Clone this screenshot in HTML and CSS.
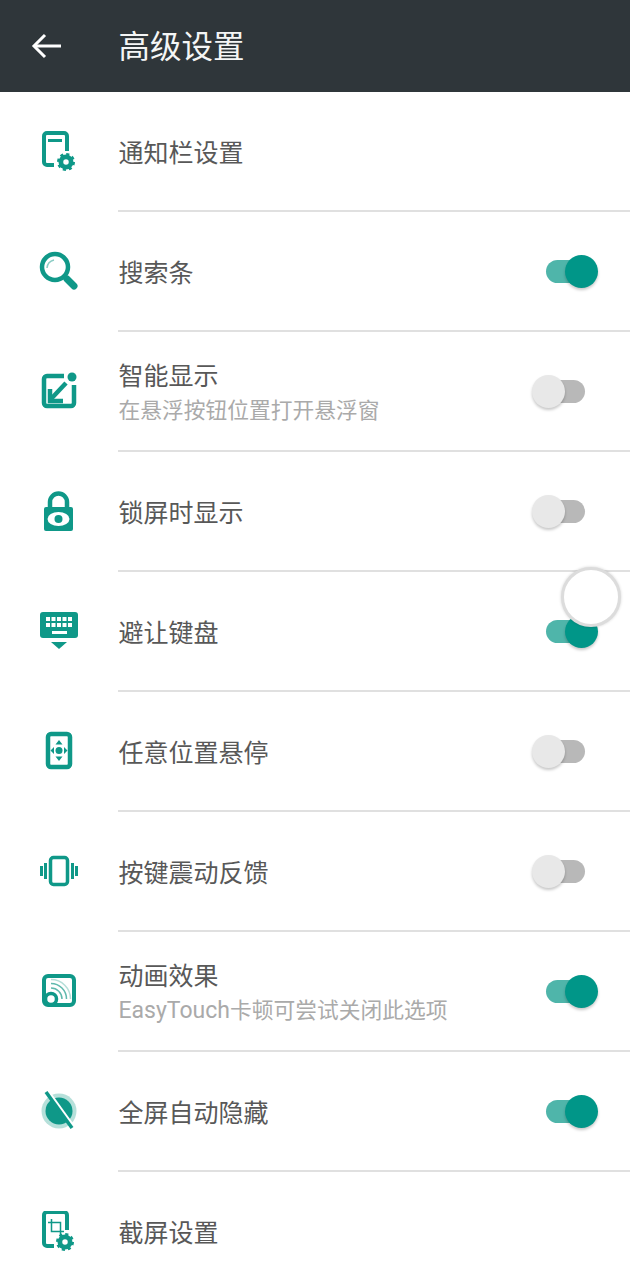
FILE: index.html
```html
<!DOCTYPE html>
<html lang="zh-CN">
<head>
<meta charset="utf-8">
<title>高级设置</title>
<link rel="stylesheet" href="styles.css">
</head>
<body>
<div class="page">
  <header class="appbar">
    <div class="appbar-icon">
      <svg width="32" height="28" viewBox="0 0 32 28" fill="none" stroke="#fff" stroke-width="3"><path d="M30 14H4"/><path d="M14 3L3 14l11 11"/></svg>
    </div>
    <h1 class="appbar-title">高级设置</h1>
  </header>
  <main class="list">
    <div class="row">
      <div class="row-icon">
        <svg class="ico" width="40" height="40" viewBox="0 0 40 40"><path class="s4" d="M28 20V5a3 3 0 0 0-3-3H8a3 3 0 0 0-3 3v26a3 3 0 0 0 3 3h7"/><path class="s3" d="M9 9.500h14"/><circle class="gear-teeth" cx="27" cy="31" r="7.500"/><circle class="gear-hub" cx="27" cy="31" r="4"/></svg>
      </div>
      <div class="row-body"><div class="text"><div class="label">通知栏设置</div></div></div>
    </div>
    <div class="row">
      <div class="row-icon">
        <svg class="ico" width="40" height="40" viewBox="0 0 40 40"><circle class="s45" cx="16" cy="16" r="13"/><path class="s7" d="M28 28L35 35"/><path class="thin" d="M8 17a9 9 0 0 1 7-8"/></svg>
      </div>
      <div class="row-body"><div class="text"><div class="label">搜索条</div></div><div class="toggle on"><span class="track"></span><span class="thumb"></span></div></div>
    </div>
    <div class="row">
      <div class="row-icon">
        <svg class="ico" width="40" height="40" viewBox="0 0 40 40"><path class="s45" d="M25 5H8a3 3 0 0 0-3 3v24a3 3 0 0 0 3 3h24a3 3 0 0 0 3-3V14"/><circle class="fill" cx="33" cy="6" r="4.500"/><path class="s45" d="M27 12L11 29"/><path class="s45" d="M11 18v12h13"/></svg>
      </div>
      <div class="row-body"><div class="text"><div class="label">智能显示</div><div class="sub">在悬浮按钮位置打开悬浮窗</div></div><div class="toggle"><span class="track"></span><span class="thumb"></span></div></div>
    </div>
    <div class="row">
      <div class="row-icon">
        <svg class="ico" width="40" height="40" viewBox="0 0 40 40"><path class="s45" d="M11 17v-6a8.500 8.500 0 0 1 17 0v6"/><rect class="fill" x="5" y="16" width="29" height="24" rx="2"/><ellipse class="hole" cx="19.500" cy="28" rx="11" ry="7"/><circle class="fill" cx="19.500" cy="28" r="4"/></svg>
      </div>
      <div class="row-body"><div class="text"><div class="label">锁屏时显示</div></div><div class="toggle"><span class="track"></span><span class="thumb"></span></div></div>
    </div>
    <div class="row">
      <div class="row-icon">
        <svg class="ico" width="40" height="40" viewBox="0 0 40 40"><rect class="fill" x="1" y="1" width="38" height="26" rx="3"/><path class="keys" d="M7 8h26M7 14h26"/><path class="space" d="M13 21.500h15"/><path class="fill" d="M12 31h16l-8 7z"/></svg>
      </div>
      <div class="row-body"><div class="text"><div class="label">避让键盘</div></div><div class="toggle on"><span class="track"></span><span class="thumb"></span></div></div>
    </div>
    <div class="row">
      <div class="row-icon">
        <svg class="ico" width="40" height="40" viewBox="0 0 40 40"><rect class="s45" x="9" y="3" width="22" height="33" rx="3"/><circle class="fill" cx="20" cy="19.500" r="3.500"/><path class="fill" d="M20 9l3.500 4.500h-7zM20 30l3.500-4.500h-7zM11.500 19.500l3.500-3.500v7zM28.500 19.500l-3.500-3.500v7z"/></svg>
      </div>
      <div class="row-body"><div class="text"><div class="label">任意位置悬停</div></div><div class="toggle"><span class="track"></span><span class="thumb"></span></div></div>
    </div>
    <div class="row">
      <div class="row-icon">
        <svg class="ico" width="40" height="40" viewBox="0 0 40 40"><rect class="s35" x="11.500" y="6.500" width="17" height="27" rx="3"/><path class="fill" d="M1 15h3v10H1zM5 12h3v16H5zM32 12h3v16h-3zM36 15h3v10h-3z"/></svg>
      </div>
      <div class="row-body"><div class="text"><div class="label">按键震动反馈</div></div><div class="toggle"><span class="track"></span><span class="thumb"></span></div></div>
    </div>
    <div class="row">
      <div class="row-icon">
        <svg class="ico" width="40" height="40" viewBox="0 0 40 40"><rect class="s4" x="5" y="5" width="30" height="29" rx="4"/><path class="arc2" d="M12 8.500a19.500 19.500 0 0 1 19.500 19.500"/><path class="arc1" d="M12 12.500a15.500 15.500 0 0 1 15.500 15.500"/><path class="arc1" d="M12 17a11 11 0 0 1 11 11"/><circle class="ring" cx="12" cy="28" r="5.500"/></svg>
      </div>
      <div class="row-body"><div class="text"><div class="label">动画效果</div><div class="sub"><span class="latin">EasyTouch</span>卡顿可尝试关闭此选项</div></div><div class="toggle on"><span class="track"></span><span class="thumb"></span></div></div>
    </div>
    <div class="row">
      <div class="row-icon">
        <svg class="ico" width="40" height="40" viewBox="0 0 40 40"><circle class="halo" cx="20" cy="20" r="17.500"/><circle class="fill" cx="20" cy="20" r="13.500"/><path class="cut" d="M9 1l26 36"/><path class="s35" d="M7 1l26 36"/></svg>
      </div>
      <div class="row-body"><div class="text"><div class="label">全屏自动隐藏</div></div><div class="toggle on"><span class="track"></span><span class="thumb"></span></div></div>
    </div>
    <div class="row">
      <div class="row-icon">
        <svg class="ico" width="40" height="40" viewBox="0 0 40 40"><path class="s4" d="M28 19V4a3 3 0 0 0-3-3H8a3 3 0 0 0-3 3v28a3 3 0 0 0 3 3h7"/><path class="thin-dark" d="M12.500 8v12.500H25"/><path class="thin-dark" d="M9 11.500h12.500V24"/><circle class="gear-teeth" cx="26" cy="31" r="7.500"/><circle class="gear-hub" cx="26" cy="31" r="4"/></svg>
      </div>
      <div class="row-body"><div class="text"><div class="label">截屏设置</div></div></div>
    </div>
  </main>
  <div class="float-ball"></div>
</div>
</body>
</html>
```

FILE: styles.css
```css
* { box-sizing: border-box; }
html, body { margin: 0; padding: 0; background: #fff; }
body { font-family: Roboto, "Noto Sans CJK SC", sans-serif; }
.page { position: relative; width: 630px; height: 1280px; overflow: hidden; background: #fff; }
.appbar { display: flex; align-items: center; height: 92px; background: #2f363a; }
.appbar-icon { display: flex; justify-content: center; width: 94px; flex: none; }
.appbar-title { margin: 4px 0 0 24.500px; font-size: 31.500px; line-height: 40px; font-weight: 400; color: #f4f5f5; }
.row { display: flex; height: 120px; }
.row-icon { display: flex; align-items: center; justify-content: center; width: 118px; flex: none; padding-bottom: 2px; }
.row-body { display: flex; align-items: center; flex: 1; padding-right: 32px; border-bottom: 2px solid #e0e0e0; }
.text { flex: 1; padding: 6px 0 0 .500px; }
.label { font-size: 25px; line-height: 34px; color: #585858; }
.sub { margin: 2px 0; font-size: 21.750px; line-height: 30px; color: #aaa; white-space: nowrap; }
.latin { font-size: 23px; }
.toggle { position: relative; width: 66px; height: 34px; flex: none; }
.track { position: absolute; top: 6px; left: 14px; width: 39px; height: 23px; border-radius: 12px; background: #b8b8b8; }
.thumb { position: absolute; top: 1px; left: 0; width: 33px; height: 33px; border-radius: 50%; background: #e8e8e8; box-shadow: 0 2px 3px rgba(0, 0, 0, .22); }
.toggle.on .track { background: #4fb5aa; }
.toggle.on .thumb { left: 33px; background: #009688; }
.float-ball { position: absolute; left: 561px; top: 567px; width: 60px; height: 60px; border-radius: 50%; background: #fff; border: 3px solid #dcdcdc; box-shadow: 0 0 3px rgba(0, 0, 0, .18); }
.ico { display: block; }
.ico * { fill: none; stroke: none; }
.ico .s3 { stroke: #0f9888; stroke-width: 3px; }
.ico .s35 { stroke: #0f9888; stroke-width: 3.500px; }
.ico .s4 { stroke: #0f9888; stroke-width: 4px; }
.ico .s45 { stroke: #0f9888; stroke-width: 4.500px; }
.ico .s7 { stroke: #0f9888; stroke-width: 7px; stroke-linecap: round; }
.ico .fill { fill: #0f9888; }
.ico .hole { fill: #fff; }
.ico .thin { stroke: #8accc4; stroke-width: 1.500px; }
.ico .thin-dark { stroke: #0f9888; stroke-width: 1.500px; }
.ico .gear-teeth { fill: #0f9888; stroke: #0f9888; stroke-width: 3px; stroke-dasharray: 3 2.890; }
.ico .gear-hub { fill: #fff; stroke: #0f9888; stroke-width: 2.500px; }
.ico .keys { stroke: #fff; stroke-width: 4px; stroke-dasharray: 4 1.500; }
.ico .space { stroke: #fff; stroke-width: 3px; }
.ico .arc1 { stroke: #5fb9ad; stroke-width: 1.500px; }
.ico .arc2 { stroke: #b5ded8; stroke-width: 1.500px; }
.ico .ring { fill: #fff; stroke: #0f9888; stroke-width: 3.500px; }
.ico .halo { fill: #b6e0da; }
.ico .cut { stroke: #fff; stroke-width: 4px; }
```
